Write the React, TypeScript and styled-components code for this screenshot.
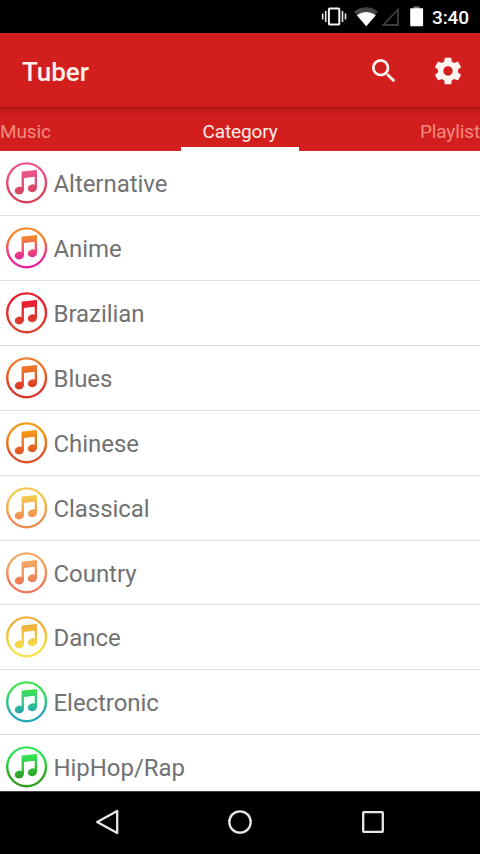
import React from "react";
import styled, { createGlobalStyle } from "styled-components";

const GlobalStyle = createGlobalStyle`
  * { box-sizing: border-box; }
  body { margin: 0; background: #000; font-family: Roboto, sans-serif; }
`;

const Screen = styled.div`
  width: 480px;
  height: 854px;
  display: flex;
  flex-direction: column;
  overflow: hidden;
  background: #fff;
`;

const StatusBar = styled.header`
  flex: none;
  height: 33px;
  background: #000;
  display: flex;
  justify-content: flex-end;
  align-items: center;
  padding-right: 11px;
`;

const StatusIcons = styled.svg`
  width: 104px;
  height: 33px;
  margin-right: 8px;
`;

const Clock = styled.time`
  width: 37px;
  color: #fff;
  font-size: 19px;
  font-weight: 500;
  line-height: 33px;
  letter-spacing: -0.15px;
  white-space: nowrap;
  padding-top: 1px;
`;

const AppBar = styled.div`
  flex: none;
  height: 74px;
  padding: 1px 16px 0 22px;
  background: #d21f1e;
  display: flex;
  align-items: center;
  gap: 32px;
`;

const Title = styled.h1`
  flex: 1;
  margin: 0;
  padding-top: 2px;
  color: #fff0ea;
  font-size: 26px;
  font-weight: 500;
`;

const ActionButton = styled.button`
  width: 32px;
  height: 32px;
  padding: 0;
  border: 0;
  background: none;
  color: #fff5f0;
  svg { display: block; width: 32px; height: 32px; fill: currentColor; }
`;

const Tabs = styled.nav`
  flex: none;
  height: 44px;
  background: linear-gradient(#a91713, #bd1b17 3px, #d21f1e 8px);
  display: grid;
  grid-template-columns: 181px 118px 181px;
  border-bottom: 1px solid #cf2a29;
`;

const Tab = styled.a<{ $active?: boolean; $align: string }>`
  height: ${(p) => (p.$active ? 44 : 43)}px;
  padding-top: 4px;
  line-height: 42px;
  font-size: 19px;
  letter-spacing: -0.12px;
  text-align: ${(p) => p.$align};
  color: ${(p) => (p.$active ? "#ffede5" : "#f48a82")};
  box-shadow: ${(p) => (p.$active ? "inset 0 -4px #fff" : "none")};
`;

const List = styled.ul`
  flex: 1;
  min-height: 0;
  margin: 0;
  padding: 0.45px 0 0;
  list-style: none;
  overflow: hidden;
  background: #fff;
`;

const Row = styled.li`
  height: 64.87px;
  display: flex;
  align-items: center;
  gap: 5.5px;
  padding-left: 6px;
  border-bottom: 1px solid #dfdfdf;
  color: #727272;
  font-size: 24px;
  letter-spacing: -0.05px;
`;

const Badge = styled.svg`
  width: 42px;
  height: 42px;
  flex: none;
`;

const Label = styled.span`
  padding-top: 2px;
`;

const NavBar = styled.footer`
  flex: none;
  height: 63px;
  padding-bottom: 2px;
  border-top: 1px solid #404040;
  background: #000;
  display: grid;
  grid-template-columns: repeat(3, 133.3px);
  justify-content: center;
  justify-items: center;
  align-items: center;
  svg { width: 28px; height: 28px; fill: none; stroke: #e8e8e8; stroke-width: 2.3; }
`;

const categories: [string, string, string][] = [
  ["Alternative", "#e9568d", "#d6445b"],
  ["Anime", "#f58b2b", "#e5249c"],
  ["Brazilian", "#e91d30", "#dc3e30"],
  ["Blues", "#f07a2c", "#da3529"],
  ["Chinese", "#f29a18", "#df5127"],
  ["Classical", "#f3cb50", "#ed8c50"],
  ["Country", "#f5a967", "#ee7858"],
  ["Dance", "#f0ae3c", "#f5df4a"],
  ["Electronic", "#3ee253", "#27a9b5"],
  ["HipHop/Rap", "#35e557", "#2f9e22"],
];

function MusicBadge({ id, from, to }: { id: string; from: string; to: string }) {
  const paint = `url(#${id})`;
  return (
    <Badge viewBox="0 0 42 42">
      <defs>
        <linearGradient id={id} gradientUnits="userSpaceOnUse" x1="0" y1="9" x2="0" y2="32">
          <stop offset="0" stopColor={from} />
          <stop offset="1" stopColor={to} />
        </linearGradient>
      </defs>
      <circle cx="20.6" cy="20.8" r="19.4" fill="none" stroke={paint} strokeWidth="2.4" />
      <g fill={paint}>
        <path d="M15.6 10.4Q15.6 9.5 16.4 9.4L30.2 8Q31 8 31 8.8V26H28.7V14.7L17.9 15.9V28.6H15.6Z" />
        <ellipse cx="13.3" cy="28.5" rx="4.6" ry="3.9" transform="rotate(-12 13.3 28.5)" />
        <ellipse cx="26.4" cy="26.2" rx="4.6" ry="3.9" transform="rotate(-12 26.4 26.2)" />
      </g>
    </Badge>
  );
}

export default function App() {
  return (
    <>
      <GlobalStyle />
      <Screen>
        <StatusBar>
          <StatusIcons viewBox="320 0 104 33">
            <rect x="328.9" y="8.6" width="10.4" height="16" rx="0.8" fill="none" stroke="#f4f4f4" strokeWidth="2" />
            <path d="M325.7 11v11M322.7 13.5v6M342.5 11v11M345.5 13.5v6" stroke="#e6e6e6" strokeWidth="1.6" />
            <path d="M354 11.6Q366 3 378 11.6L366.3 26.2Z" fill="#454545" />
            <path d="M356.8 15.2Q366.2 9 375.8 15.2L366.3 26.2Z" fill="#fff" />
            <path d="M398 9.7V25H383.3Z" fill="none" stroke="#3e3e3e" strokeWidth="1.8" />
            <rect x="413.4" y="6.4" width="6.2" height="3" fill="#777" />
            <rect x="410.2" y="8.3" width="12.9" height="18" rx="0.8" fill="#fff" />
          </StatusIcons>
          <Clock>3:40</Clock>
        </StatusBar>
        <AppBar>
          <Title>Tuber</Title>
          <ActionButton aria-label="Search">
            <svg viewBox="0 0 24 24">
              <path d="M15.5 14h-.79l-.28-.27A6.47 6.47 0 0 0 16 9.5 6.5 6.5 0 1 0 9.5 16c1.61 0 3.09-.59 4.23-1.57l.27.28v.79l5 4.99L20.49 19l-4.99-5zm-6 0A4.5 4.5 0 1 1 14 9.5 4.49 4.49 0 0 1 9.5 14z" />
            </svg>
          </ActionButton>
          <ActionButton aria-label="Settings">
            <svg viewBox="0 0 24 24">
              <path d="M19.43 12.98c.04-.32.07-.64.07-.98s-.03-.66-.07-.98l2.11-1.65c.19-.15.24-.42.12-.64l-2-3.46c-.12-.22-.39-.3-.61-.22l-2.49 1c-.52-.4-1.08-.73-1.69-.98l-.38-2.65C14.46 2.18 14.25 2 14 2h-4c-.25 0-.46.18-.49.42l-.38 2.65c-.61.25-1.17.59-1.69.98l-2.49-1c-.23-.09-.49 0-.61.22l-2 3.46c-.13.22-.07.49.12.64l2.11 1.65c-.04.32-.07.65-.07.98s.03.66.07.98l-2.11 1.65c-.19.15-.24.42-.12.64l2 3.46c.12.22.39.3.61.22l2.49-1c.52.4 1.08.73 1.69.98l.38 2.65c.03.24.24.42.49.42h4c.25 0 .46-.18.49-.42l.38-2.65c.61-.25 1.17-.59 1.69-.98l2.49 1c.23.09.49 0 .61-.22l2-3.46c.12-.22.07-.49-.12-.64l-2.11-1.65zM12 15.5c-1.93 0-3.5-1.57-3.5-3.5s1.57-3.5 3.5-3.5 3.5 1.57 3.5 3.5-1.57 3.5-3.5 3.5z" />
            </svg>
          </ActionButton>
        </AppBar>
        <Tabs>
          <Tab $align="left">Music</Tab>
          <Tab $align="center" $active>Category</Tab>
          <Tab $align="right">Playlist</Tab>
        </Tabs>
        <List>
          {categories.map(([name, from, to], i) => (
            <Row key={name}>
              <MusicBadge id={`tone-${i}`} from={from} to={to} />
              <Label>{name}</Label>
            </Row>
          ))}
        </List>
        <NavBar>
          <svg viewBox="0 0 28 28"><path d="M24.2 3V25L4.2 14Z" strokeLinejoin="round" /></svg>
          <svg viewBox="0 0 28 28"><circle cx="14" cy="14" r="10.7" /></svg>
          <svg viewBox="0 0 28 28"><rect x="4.2" y="4.2" width="19.6" height="19.6" rx="0.6" /></svg>
        </NavBar>
      </Screen>
    </>
  );
}
